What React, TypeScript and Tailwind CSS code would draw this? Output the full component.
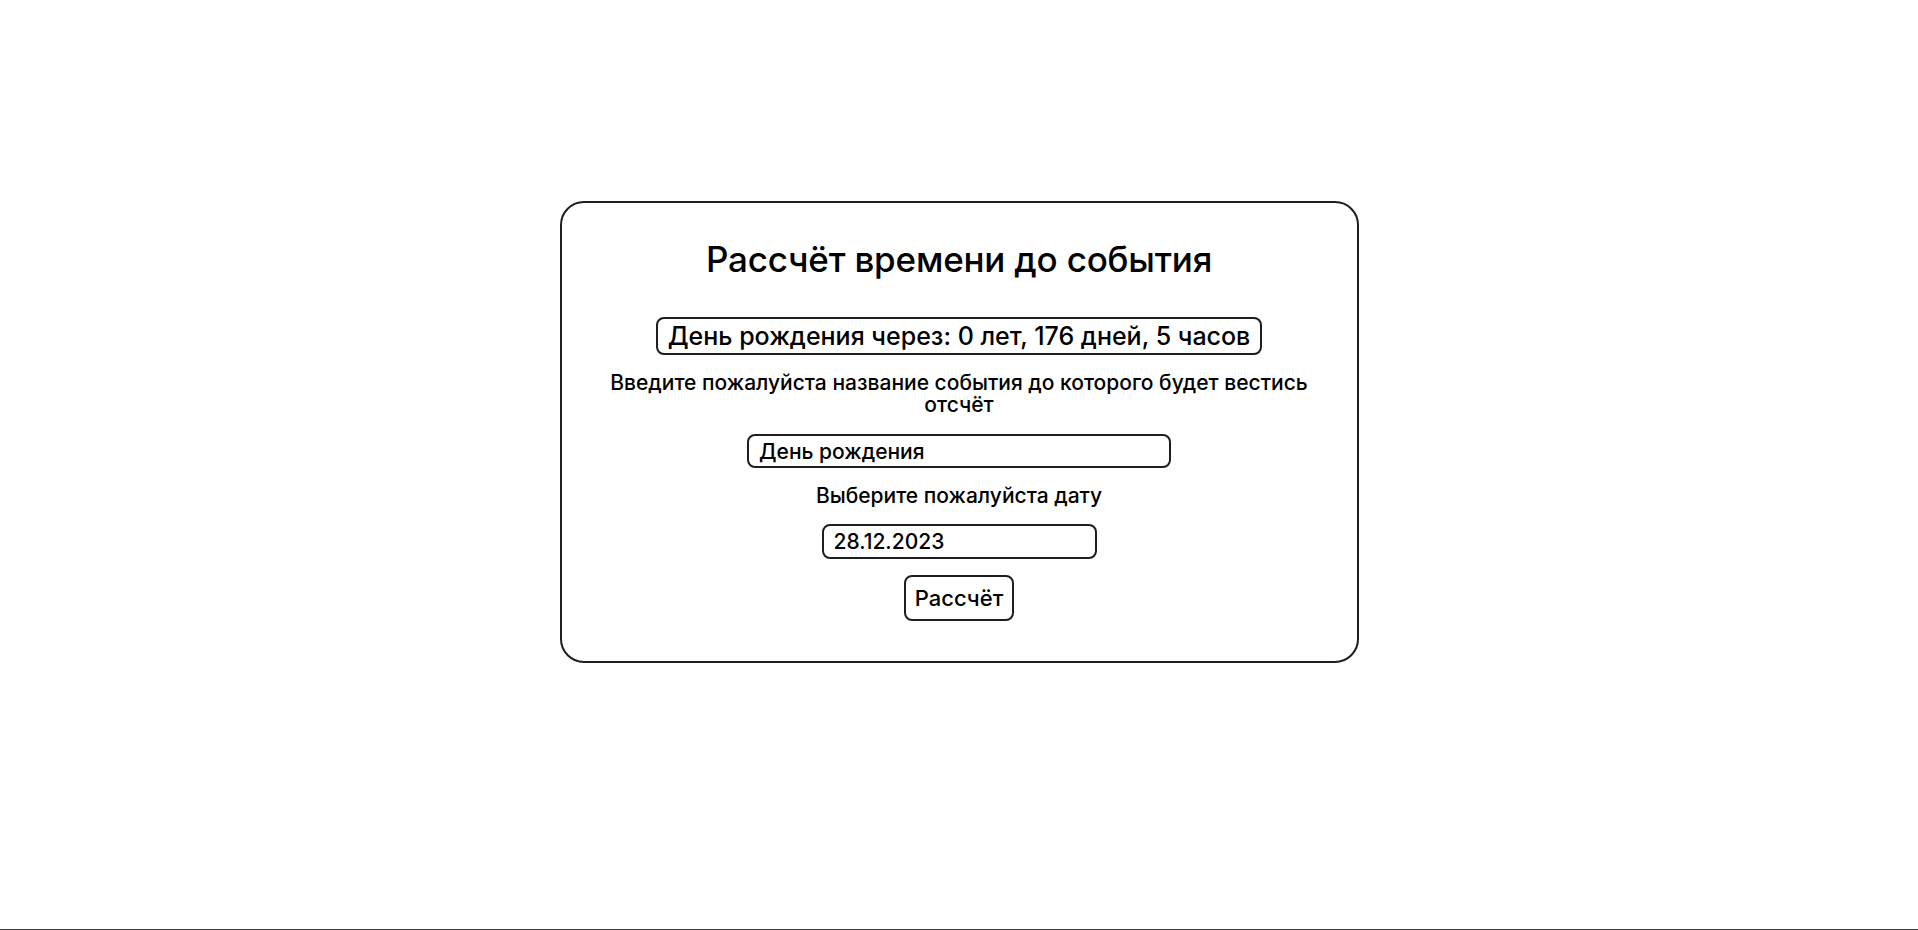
export default function App() {
  return (
    <div
      className="h-screen w-full bg-white border-b border-[#3c3c3c] flex justify-center"
      style={{ fontFamily: 'Inter, "Noto Sans", sans-serif' }}
    >
      <div className="mt-[201px] self-start w-[799px] h-[462px] border-2 border-[#1e1e1e] rounded-[24px] px-10 pt-[35px] flex flex-col items-center text-black">
        <h1 className="text-[35px] leading-[42px] font-medium tracking-[-0.2px]">
          Рассчёт времени до события
        </h1>

        <div className="mt-[37px] h-[38px] px-[10px] flex items-center border-2 border-[#1e1e1e] rounded-lg text-[25px] leading-none font-medium">
          День рождения через: 0 лет, 176 дней, 5 часов
        </div>

        <p className="mt-[17px] text-center text-[21px] leading-[22px] font-medium">
          Введите пожалуйста название события до которого будет вестись отсчёт
        </p>

        <input
          className="mt-[18px] w-[424px] h-[34px] px-[10px] border-2 border-[#1e1e1e] rounded-lg text-[21px] font-medium outline-none"
          defaultValue="День рождения"
        />

        <p className="mt-[16px] text-[21px] leading-[24px] font-medium">
          Выберите пожалуйста дату
        </p>

        <input
          className="mt-[16px] w-[275px] h-[35px] px-[10px] border-2 border-[#1e1e1e] rounded-lg text-[21px] font-medium outline-none"
          defaultValue="28.12.2023"
        />

        <button className="mt-[16px] h-[46px] px-[9px] border-2 border-[#1e1e1e] rounded-lg text-[22px] font-medium bg-white">
          Рассчёт
        </button>
      </div>
    </div>
  );
}
